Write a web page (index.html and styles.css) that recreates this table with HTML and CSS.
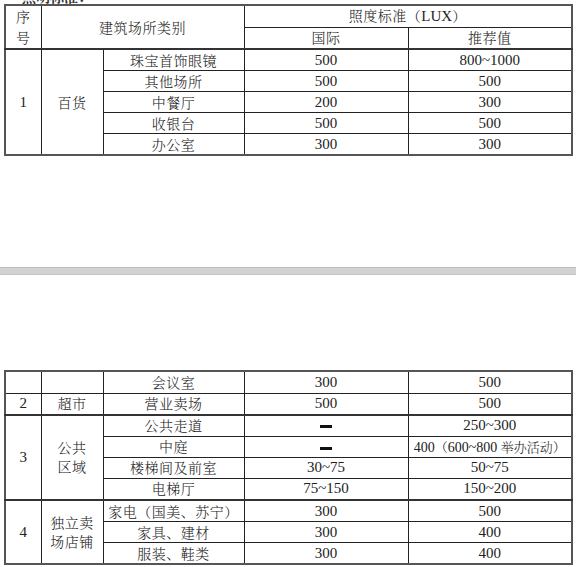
FILE: index.html
```html
<!DOCTYPE html>
<html lang="zh">
<head>
<meta charset="utf-8">
<link rel="stylesheet" href="styles.css">
</head>
<body>
<div class="caption"><span>照明标准：</span></div>
<table class="grid top">
  <colgroup><col class="c1"><col class="c2"><col class="c3"><col class="c4"><col class="c5"></colgroup>
  <tr class="h1">
    <td rowspan="2" class="cjk">序<br>号</td>
    <td rowspan="2" colspan="2" class="cjk">建筑场所类别</td>
    <td colspan="2" class="cjk">照度标准（<span class="num">LUX</span>）</td>
  </tr>
  <tr class="h2">
    <td class="cjk">国际</td>
    <td class="cjk">推荐值</td>
  </tr>
  <tr class="sep">
    <td rowspan="5" class="num">1</td>
    <td rowspan="5" class="cjk">百货</td>
    <td class="cjk">珠宝首饰眼镜</td>
    <td class="num">500</td>
    <td class="num">800~1000</td>
  </tr>
  <tr><td class="cjk">其他场所</td><td class="num">500</td><td class="num">500</td></tr>
  <tr><td class="cjk">中餐厅</td><td class="num">200</td><td class="num">300</td></tr>
  <tr><td class="cjk">收银台</td><td class="num">500</td><td class="num">500</td></tr>
  <tr><td class="cjk">办公室</td><td class="num">300</td><td class="num">300</td></tr>
</table>

<div class="divider"></div>

<table class="grid bottom">
  <colgroup><col class="c1"><col class="c2"><col class="c3"><col class="c4"><col class="c5"></colgroup>
  <tr><td></td><td></td><td class="cjk">会议室</td><td class="num">300</td><td class="num">500</td></tr>
  <tr><td class="num">2</td><td class="cjk">超市</td><td class="cjk">营业卖场</td><td class="num">500</td><td class="num">500</td></tr>
  <tr class="sep">
    <td rowspan="4" class="num">3</td>
    <td rowspan="4" class="cjk">公共<br>区域</td>
    <td class="cjk">公共走道</td>
    <td><span class="dash"></span></td>
    <td class="num">250~300</td>
  </tr>
  <tr><td class="cjk">中庭</td><td><span class="dash"></span></td><td class="num mixed">400<span class="cjk tight">（</span>600~800 <span class="cjk tight">举办活动）</span></td></tr>
  <tr><td class="cjk">楼梯间及前室</td><td class="num">30~75</td><td class="num">50~75</td></tr>
  <tr><td class="cjk">电梯厅</td><td class="num">75~150</td><td class="num">150~200</td></tr>
  <tr class="sep">
    <td rowspan="3" class="num">4</td>
    <td rowspan="3" class="cjk">独立卖<br>场店铺</td>
    <td class="cjk">家电（国美、苏宁）</td>
    <td class="num">300</td>
    <td class="num">500</td>
  </tr>
  <tr><td class="cjk">家具、建材</td><td class="num">300</td><td class="num">400</td></tr>
  <tr><td class="cjk">服装、鞋类</td><td class="num">300</td><td class="num">400</td></tr>
</table>
</body>
</html>
```
FILE: styles.css
```css
html, body {
  margin: 0;
  padding: 0;
  background: #ffffff;
}
body {
  width: 576px;
  height: 567px;
  overflow: hidden;
  color: #222;
  font-family: "Liberation Serif", "Noto Serif CJK SC", "Noto Sans CJK SC", serif;
  font-size: 14px;
}
.caption {
  height: 4px;
  overflow: hidden;
  padding-left: 22px;
}
.caption span {
  display: block;
  margin-top: -11px;
  font-family: "Noto Serif CJK SC", "Noto Sans CJK SC", sans-serif;
  font-size: 14px;
  line-height: 14px;
  font-weight: 700;
  color: #333;
}
.grid {
  border-collapse: collapse;
  table-layout: fixed;
  width: 567px;
  margin-left: 4px;
  border: 2px solid #555;
}
.grid td {
  border: 1px solid #222;
  padding: 0;
  text-align: center;
  vertical-align: middle;
  line-height: 19px;
  height: 20.1px;
  white-space: nowrap;
}
.c1 { width: 36px; }
.c2 { width: 62px; }
.c3 { width: 141px; }
.c4 { width: 164px; }
.c5 { width: 164px; }
.cjk {
  font-family: "Noto Serif CJK SC", "Noto Sans CJK SC", sans-serif;
  font-weight: 300;
  letter-spacing: 0.5px;
}
.num {
  font-family: "Liberation Serif", serif;
  font-size: 15px;
  letter-spacing: 0;
}
.num .cjk { font-size: 14px; }
.num.mixed { font-size: 14px; }
.num .tight { font-size: 13px; letter-spacing: 0; }
.grid tr.sep td { border-top: 2px solid #333; }
.top .h1 td:first-child { line-height: 21px; }
.dash {
  display: inline-block;
  width: 12px;
  height: 3px;
  background: #111;
  vertical-align: middle;
}
.divider {
  margin-top: 111px;
  height: 8px;
  background: #d2d2d2;
  border-top: 1px solid #bdbdbd;
  border-bottom: 1px solid #c4c4c4;
  box-sizing: border-box;
}
.bottom {
  margin-top: 95px;
}
```
